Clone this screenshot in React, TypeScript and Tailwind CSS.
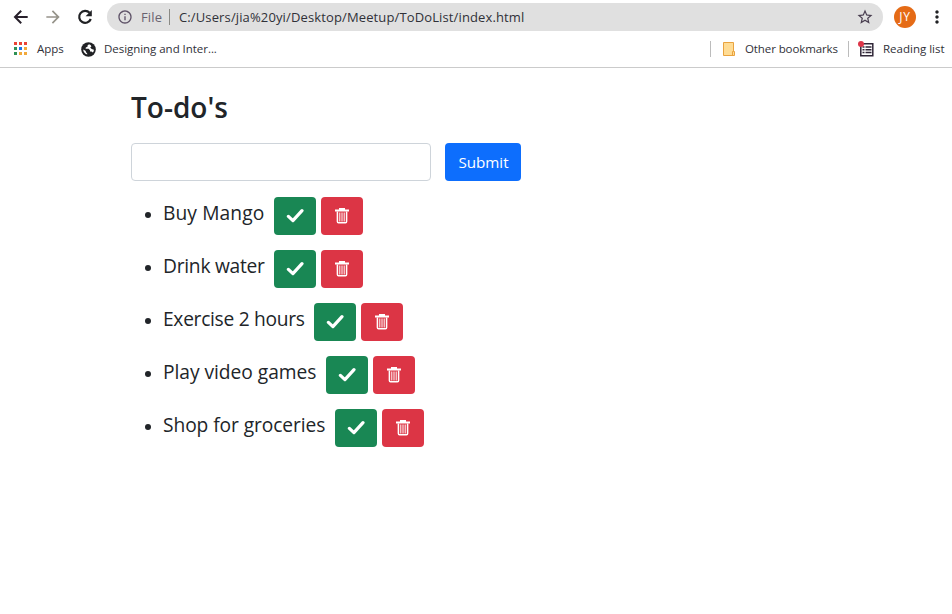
import { MdArrowForward, MdMoreVert, MdStarBorder, MdInfoOutline } from 'react-icons/md';

const todos = [
  { text: 'Buy Mango', box: 'w-[101px]', tracking: 'tracking-[0.1px]' },
  { text: 'Drink water', box: 'w-[101px]', tracking: 'tracking-[-0.25px]' },
  { text: 'Exercise 2 hours', box: 'w-[141px]', tracking: 'tracking-[-0.29px]' },
  { text: 'Play video games', box: 'w-[153px]', tracking: 'tracking-[-0.03px]' },
  { text: 'Shop for groceries', box: 'w-[162px]', tracking: 'tracking-[-0.08px]' },
];

const appDots = [
  'bg-[#ea4335]', 'bg-[#ea4335]', 'bg-[#ea4335]',
  'bg-[#2f9155]', 'bg-[#1a73e8]', 'bg-[#f2a93b]',
  'bg-[#2f9155]', 'bg-[#f2a93b]', 'bg-[#f2a93b]',
];

function Check() {
  return (
    <svg width="18" height="16" viewBox="0 0 18 16" fill="none" stroke="white" strokeWidth="3.2" strokeLinecap="round" strokeLinejoin="round">
      <path d="M2.400 8.400 6.900 12.600 16 2.600" />
    </svg>
  );
}

function Trash() {
  return (
    <svg width="16" height="16" viewBox="0 0 16 16" fill="none" stroke="white">
      <path fill="white" stroke="none" d="M5 0h6v1.500h4v2H1v-2h4Z" />
      <path strokeWidth="1.500" strokeLinejoin="round" d="M3.400 3.500v10q0 1.300 1.100 1.300h7q1.100 0 1.100-1.300v-10" />
      <path strokeWidth="1" d="M5.800 4.500v9M8 4.500v9M10.200 4.500v9" />
    </svg>
  );
}

function Globe() {
  return (
    <svg className="ml-4 mt-px" width="15" height="15" viewBox="0 0 15 15">
      <circle cx="7.500" cy="7.500" r="7.300" fill="#202124" />
      <path fill="white" d="M8 2.200 6.500 3.500v1.300L4.800 5.500l-.2 1.300h3l1.400 1.400v1.300h1.500l1.400 1q1-1.300 1-2.800l-2.200-.7-1.500-1.400 1.200-1.100-.8-1.500ZM2.200 7.600q.2 3.800 4 4.800v-1L4.800 10V9Z" />
    </svg>
  );
}

function Toolbar() {
  return (
    <div className="flex h-[34px] items-center">
      <svg className="ml-[11px]" width="20" height="20" viewBox="0 0 20 20" fill="none" stroke="#28202b" strokeWidth="2">
        <path d="M16.700 10H4.300M10.200 3.800 4 10l6.200 6.200" />
      </svg>
      <MdArrowForward className="ml-3 size-5 text-[#96938a]" />
      <svg className="ml-3" width="20" height="20" viewBox="0 0 20 20">
        <path fill="none" stroke="#202124" strokeWidth="2.200" d="M14.600 5.700A6 6 0 1 0 15.800 12" />
        <path fill="#202124" d="M16.800 3v6.200h-6.200Z" />
      </svg>
      <div className="ml-3 flex h-7 w-[776px] items-center rounded-full bg-[#e0e0e0]">
        <MdInfoOutline className="ml-[10px] size-4 text-[#5f5368]" />
        <span className="ml-2 w-5 whitespace-nowrap pt-px text-[13px] tracking-[0.13px] text-[#6a6370]">File</span>
        <span className="ml-2 h-4 w-px bg-[#8a8a85]" />
        <span className="ml-[9px] whitespace-nowrap pt-px text-[13px] tracking-[0.13px] text-[#303138]">C:/Users/jia%20yi/Desktop/Meetup/ToDoList/index.html</span>
        <MdStarBorder className="ml-auto mr-[9px] size-[18px] text-[#493e50]" />
      </div>
      <div className="ml-[11px] flex size-[22px] items-center justify-center rounded-full bg-[#e56b16] text-[12px] tracking-[0.8px] text-white">JY</div>
      <MdMoreVert className="ml-[11px] size-5 shrink-0 text-[#202124]" />
    </div>
  );
}

function Bookmarks() {
  return (
    <div className="flex h-[34px] items-center border-b border-[#cbcbcb] pb-1 text-[11.5px] text-[#303138]">
      <div className="ml-[14px] grid grid-cols-3 gap-[2px]">
        {appDots.map((c, i) => <span key={i} className={`size-[3px] ${c}`} />)}
      </div>
      <span className="ml-[10px] w-7 whitespace-nowrap pt-px">Apps</span>
      <Globe />
      <span className="ml-2 whitespace-nowrap pt-px tracking-[-0.04px]">Designing and Inter...</span>
      <div className="ml-auto flex items-center">
        <span className="h-4 w-px bg-[#bcbcbc]" />
        <svg className="ml-3" width="12" height="14" viewBox="0 0 12 14" fill="#ffdc94" stroke="#e9a33f">
          <path d="M.5.5h10v9h1v4H.5ZM9.500 13v-3.500h1" />
        </svg>
        <span className="ml-[10px] w-[93px] whitespace-nowrap pt-px tracking-[-0.1px]">Other bookmarks</span>
        <span className="ml-[10px] h-4 w-px bg-[#bcbcbc]" />
        <svg className="ml-[9px]" width="16" height="16" viewBox="0 0 16 16">
          <path fill="none" stroke="#302738" strokeWidth="1.500" d="M2.800 2.800h12v12h-12ZM4.500 6h2m1 0h6M4.500 8.800h2m1 0h6M4.500 11.600h2m1 0h6" />
          <circle cx="3" cy="3" r="3" fill="#dd3548" />
        </svg>
        <span className="ml-[9px] w-[69px] whitespace-nowrap pt-px">Reading list</span>
      </div>
    </div>
  );
}

export default function App() {
  return (
    <div className="h-[614px] w-full overflow-hidden bg-white font-['Open_Sans','Noto_Sans',sans-serif] text-[#212529]">
      <Toolbar />
      <Bookmarks />
      <main className="pl-[131px] pt-[22px]">
        <h1 className="h-[34px] text-[28px] font-semibold leading-[34px]">To-do's</h1>
        <form className="mt-[19px] flex" onSubmit={(e) => e.preventDefault()}>
          <input aria-label="New to-do" className="h-[38px] w-[300px] rounded border border-[#ced4da]" />
          <button className="ml-[14px] h-[38px] w-[76px] rounded bg-[#0d6efd] pl-px text-[15.2px] text-white">Submit</button>
        </form>
        <ul className="mt-4 flex flex-col gap-[15px]">
          {todos.map((t) => (
            <li key={t.text} className="flex h-[38px] items-center">
              <span className="mb-[2px] ml-[14px] size-[6px] rounded-full bg-[#212529]" />
              <span className={`ml-3 h-[34px] whitespace-nowrap text-[19.2px] leading-[27px] ${t.box} ${t.tracking}`}>{t.text}</span>
              <button aria-label="Done" className="ml-[10px] flex h-[38px] w-[42px] items-center justify-center rounded bg-[#198754]"><Check /></button>
              <button aria-label="Delete" className="ml-[5px] flex h-[38px] w-[42px] items-center justify-center rounded bg-[#dc3545]"><Trash /></button>
            </li>
          ))}
        </ul>
      </main>
    </div>
  );
}
